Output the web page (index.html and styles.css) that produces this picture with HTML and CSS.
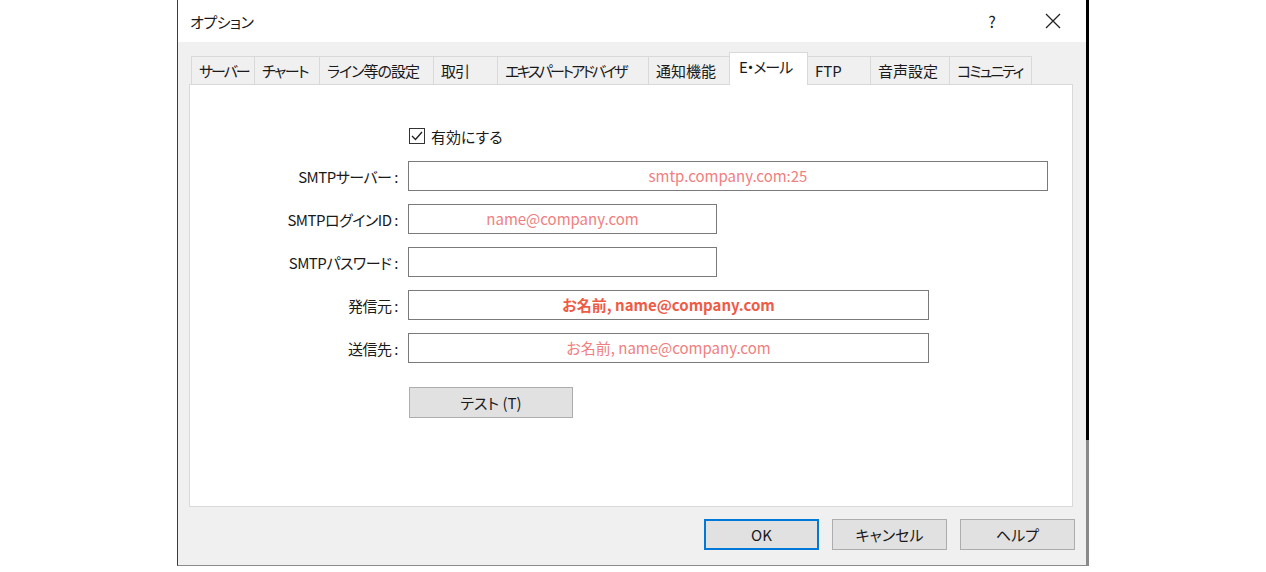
FILE: index.html
```html
<!DOCTYPE html>
<html lang="ja">
<head>
  <meta charset="UTF-8" />
  <title>オプション</title>
  <link rel="stylesheet" href="styles.css">
</head>
<body>
  <div class="desktop">
    <div class="dialog">
      <div class="titlebar">
        <span class="title">オプション</span>
        <span class="help">?</span>
        <span class="close">
          <svg width="16" height="16" viewBox="0 0 16 16"><path d="M1 1 L15 15 M15 1 L1 15" stroke="#222" stroke-width="1.3" fill="none"/></svg>
        </span>
      </div>

      <div class="content">
        <div class="tabs">
          <div class="tab">サーバー</div>
          <div class="tab">チャート</div>
          <div class="tab">ライン等の設定</div>
          <div class="tab">取引</div>
          <div class="tab">エキスパートアドバイザ</div>
          <div class="tab">通知機能</div>
          <div class="tab active">E・メール</div>
          <div class="tab">FTP</div>
          <div class="tab">音声設定</div>
          <div class="tab">コミュニティ</div>
        </div>

        <div class="panel">
          <div class="form">
            <div></div>
            <label class="check">
              <span class="box">
                <svg width="14" height="14" viewBox="0 0 14 14"><path d="M2 7 L5.5 10.5 L12 3" stroke="#222" stroke-width="1.4" fill="none"/></svg>
              </span>
              有効にする
            </label>

            <div class="label">SMTPサーバー :</div>
            <div class="field wide">smtp.company.com:25</div>

            <div class="label">SMTPログインID :</div>
            <div class="field short">name@company.com</div>

            <div class="label">SMTPパスワード :</div>
            <div class="field short"></div>

            <div class="label">発信元 :</div>
            <div class="field mid strong">お名前, name@company.com</div>

            <div class="label">送信先 :</div>
            <div class="field mid">お名前, name@company.com</div>

            <div></div>
            <button class="btn test">テスト (T)</button>
          </div>
        </div>

        <div class="footer">
          <button class="btn default">OK</button>
          <button class="btn">キャンセル</button>
          <button class="btn">ヘルプ</button>
        </div>
      </div>
    </div>
    <div class="behind"></div>
  </div>
</body>
</html>
```

FILE: styles.css
```css
body {
  margin: 0;
  background: #fff;
  font-family: "Noto Sans CJK JP", "Noto Sans", sans-serif;
  font-size: 15px;
  font-feature-settings: "palt";
  color: #1a1a1a;
}

.desktop {
  display: flex;
  padding-left: 177px;
}

.dialog {
  width: 908px;
  height: 565px;
  border-left: 1px solid #3a3a3a;
  border-bottom: 1px solid #8a8a8a;
  background: #f0f0f0;
  display: flex;
  flex-direction: column;
}

.behind {
  width: 3px;
  height: 440px;
  background: #000;
  border-bottom: 126px solid #8a8a8a;
}

.titlebar {
  height: 42px;
  background: #fff;
  display: flex;
  align-items: center;
  padding-left: 12px;
}

.title {
  flex: 1;
  letter-spacing: -0.5px;
}

.help {
  width: 20px;
  text-align: center;
  font-size: 16px;
  margin-right: 43px;
}

.close {
  display: flex;
  margin-right: 25px;
}

.content {
  flex: 1;
  display: flex;
  flex-direction: column;
  padding: 10px 13px 0 11px;
}

.tabs {
  display: flex;
  align-items: flex-end;
  height: 32px;
  padding-left: 2px;
  position: relative;
  z-index: 1;
}

.tab {
  height: 28px;
  line-height: 27px;
  padding-left: 7px;
  box-sizing: border-box;
  border: 1px solid #d9d9d9;
  border-right: none;
  border-bottom: none;
  background: #f0f0f0;
  white-space: nowrap;
  letter-spacing: -1px;
}

.tab:last-child {
  border-right: 1px solid #d9d9d9;
}

.tab:nth-child(1) { width: 63px; letter-spacing: -2px; }
.tab:nth-child(2) { width: 65px; letter-spacing: -1.5px; }
.tab:nth-child(3) { width: 114px; }
.tab:nth-child(4) { width: 64px; }
.tab:nth-child(5) { width: 151px; letter-spacing: -2.6px; }
.tab:nth-child(6) { width: 81px; letter-spacing: 0; }
.tab:nth-child(7) { width: 79px; }
.tab:nth-child(8) { width: 62px; letter-spacing: 0; }
.tab:nth-child(9) { width: 79px; letter-spacing: 0; }
.tab:nth-child(10) { width: 83px; letter-spacing: -2px; }

.tab.active {
  height: 33px;
  line-height: 28px;
  background: #fff;
  margin-bottom: -1px;
  border-right: 1px solid #d9d9d9;
  padding-left: 9px;
}

.tab.active + .tab {
  border-left: none;
}

.panel {
  height: 423px;
  box-sizing: border-box;
  background: #fff;
  border: 1px solid #d9d9d9;
  padding-top: 41px;
}

.form {
  display: grid;
  grid-template-columns: 208px auto;
  column-gap: 10px;
  row-gap: 13px;
  align-items: center;
}

.check {
  display: flex;
  align-items: center;
  gap: 6px;
  height: 20px;
  margin-bottom: 2px;
}

.box {
  width: 14px;
  height: 14px;
  border: 1px solid #333;
  display: flex;
  margin-left: 1px;
}

.label {
  text-align: right;
  white-space: nowrap;
  letter-spacing: -0.5px;
}

.field {
  height: 30px;
  box-sizing: border-box;
  border: 1px solid #7a7a7a;
  text-align: center;
  line-height: 27px;
  color: #f08080;
}

.field.wide { width: 640px; }
.field.short { width: 309px; }
.field.mid { width: 521px; }

.field.strong {
  color: #ee5b45;
  font-weight: bold;
}

.btn {
  height: 31px;
  width: 115px;
  background: #e1e1e1;
  border: 1px solid #adadad;
  font-family: inherit;
  font-size: 15px;
  font-feature-settings: "palt";
  color: #1a1a1a;
  padding: 0;
}

.btn.test {
  width: 164px;
  margin-top: 11px;
  margin-left: 1px;
}

.btn.default {
  border: 2px solid #0078d7;
}

.footer {
  display: flex;
  justify-content: flex-end;
  gap: 13px;
  padding-top: 12px;
  margin-right: -2px;
}
```
